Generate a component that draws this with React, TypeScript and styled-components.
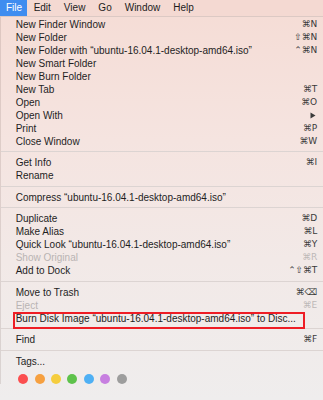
import React from "react";
import styled, { createGlobalStyle, css } from "styled-components";

const Global = createGlobalStyle`
  html, body { margin: 0; padding: 0; }
  body {
    width: 323px;
    height: 400px;
    overflow: hidden;
    font-family: "Liberation Sans", Arial, "DejaVu Sans", sans-serif;
    background: #f0eded;
  }
`;

const Screen = styled.div`
  width: 323px;
  height: 400px;
  display: flex;
  flex-direction: column;
  background: linear-gradient(180deg, #f5dcd5 0%, #f5e4e0 35%, #f2e9e7 65%, #efeded 100%);
  overflow: hidden;
`;

const MenuBar = styled.div`
  height: 16px;
  display: flex;
  align-items: stretch;
  border-bottom: 1px solid #dcc9c4;
  background: #f4d9d2;
  font-size: 10px;
  color: #1c1c1c;
`;

const MenuTitle = styled.div<{ $active?: boolean }>`
  display: flex;
  align-items: center;
  padding: 0 6.5px;
  line-height: 16px;
  ${(p) =>
    p.$active &&
    css`
      background: #3f8df0;
      color: #ffffff;
      padding: 0 5px 0 6px;
    `}
`;

const Menu = styled.div`
  display: flex;
  flex-direction: column;
  padding-top: 0.5px;
  border-left: 1px solid rgba(120, 100, 95, 0.18);
  margin-left: 0;
  font-size: 10px;
  color: #1e1e1e;
`;

const Item = styled.div<{ $disabled?: boolean; $boxed?: boolean }>`
  position: relative;
  height: 13px;
  line-height: 13px;
  display: flex;
  align-items: center;
  justify-content: space-between;
  padding: 0 6px 0 14.7px;
  white-space: nowrap;
  color: ${(p) => (p.$disabled ? "#b9b4b3" : "#1e1e1e")};
  ${(p) =>
    p.$boxed &&
    css`
      &::after {
        content: "";
        position: absolute;
        left: 11.7px;
        top: 0.2px;
        width: 292.3px;
        height: 17.6px;
        box-sizing: border-box;
        border: 2px solid #ee1d25;
        z-index: 2;
      }
    `}
`;

const Label = styled.span``;

const Shortcut = styled.span<{ $disabled?: boolean }>`
  font-family: "DejaVu Sans", "Liberation Sans", sans-serif;
  font-size: 9px;
  letter-spacing: -0.2px;
  color: ${(p) => (p.$disabled ? "#bdb8b7" : "#3a3a3a")};
  display: flex;
  align-items: center;
`;

const Separator = styled.div`
  height: 8.5px;
  display: flex;
  align-items: center;
  &::before {
    content: "";
    flex: 1;
    height: 1px;
    background: #dcd4d2;
  }
`;

const TagRow = styled.div`
  display: flex;
  gap: 6.4px;
  padding: 6.5px 0 0 17.2px;
`;

const TagDot = styled.div<{ $color: string }>`
  width: 10px;
  height: 10px;
  border-radius: 50%;
  background: ${(p) => p.$color};
`;

const Arrow = () => (
  <svg width="6" height="7" viewBox="0 0 6 7" style={{ marginRight: 1 }}>
    <path d="M0.5 0.5 L5.5 3.5 L0.5 6.5 Z" fill="#3a3a3a" />
  </svg>
);

type Entry =
  | { sep: true }
  | { label: string; key?: string; disabled?: boolean; arrow?: boolean; boxed?: boolean };

const entries: Entry[] = [
  { label: "New Finder Window", key: "⌘N" },
  { label: "New Folder", key: "⇧⌘N" },
  { label: "New Folder with “ubuntu-16.04.1-desktop-amd64.iso”", key: "⌃⌘N" },
  { label: "New Smart Folder" },
  { label: "New Burn Folder" },
  { label: "New Tab", key: "⌘T" },
  { label: "Open", key: "⌘O" },
  { label: "Open With", arrow: true },
  { label: "Print", key: "⌘P" },
  { label: "Close Window", key: "⌘W" },
  { sep: true },
  { label: "Get Info", key: "⌘I" },
  { label: "Rename" },
  { sep: true },
  { label: "Compress “ubuntu-16.04.1-desktop-amd64.iso”" },
  { sep: true },
  { label: "Duplicate", key: "⌘D" },
  { label: "Make Alias", key: "⌘L" },
  { label: "Quick Look “ubuntu-16.04.1-desktop-amd64.iso”", key: "⌘Y" },
  { label: "Show Original", key: "⌘R", disabled: true },
  { label: "Add to Dock", key: "⌃⇧⌘T" },
  { sep: true },
  { label: "Move to Trash", key: "⌘⌫" },
  { label: "Eject", key: "⌘E", disabled: true },
  { label: "Burn Disk Image “ubuntu-16.04.1-desktop-amd64.iso” to Disc...", boxed: true },
  { sep: true },
  { label: "Find", key: "⌘F" },
  { sep: true },
  { label: "Tags..." },
];

const tagColors = ["#fb4e4f", "#f6a040", "#f5cd3e", "#5ec24b", "#4fb0f4", "#c77fe0", "#9d9d9d"];

const menus = ["File", "Edit", "View", "Go", "Window", "Help"];

export default function App() {
  return (
    <>
      <Global />
      <Screen>
        <MenuBar>
          {menus.map((m, i) => (
            <MenuTitle key={m} $active={i === 0}>
              {m}
            </MenuTitle>
          ))}
        </MenuBar>
        <Menu>
          {entries.map((e, i) =>
            "sep" in e ? (
              <Separator key={i} />
            ) : (
              <Item key={i} $disabled={e.disabled} $boxed={e.boxed}>
                <Label>{e.label}</Label>
                {e.key && <Shortcut $disabled={e.disabled}>{e.key}</Shortcut>}
                {e.arrow && (
                  <Shortcut>
                    <Arrow />
                  </Shortcut>
                )}
              </Item>
            )
          )}
          <TagRow>
            {tagColors.map((c) => (
              <TagDot key={c} $color={c} />
            ))}
          </TagRow>
        </Menu>
      </Screen>
    </>
  );
}
